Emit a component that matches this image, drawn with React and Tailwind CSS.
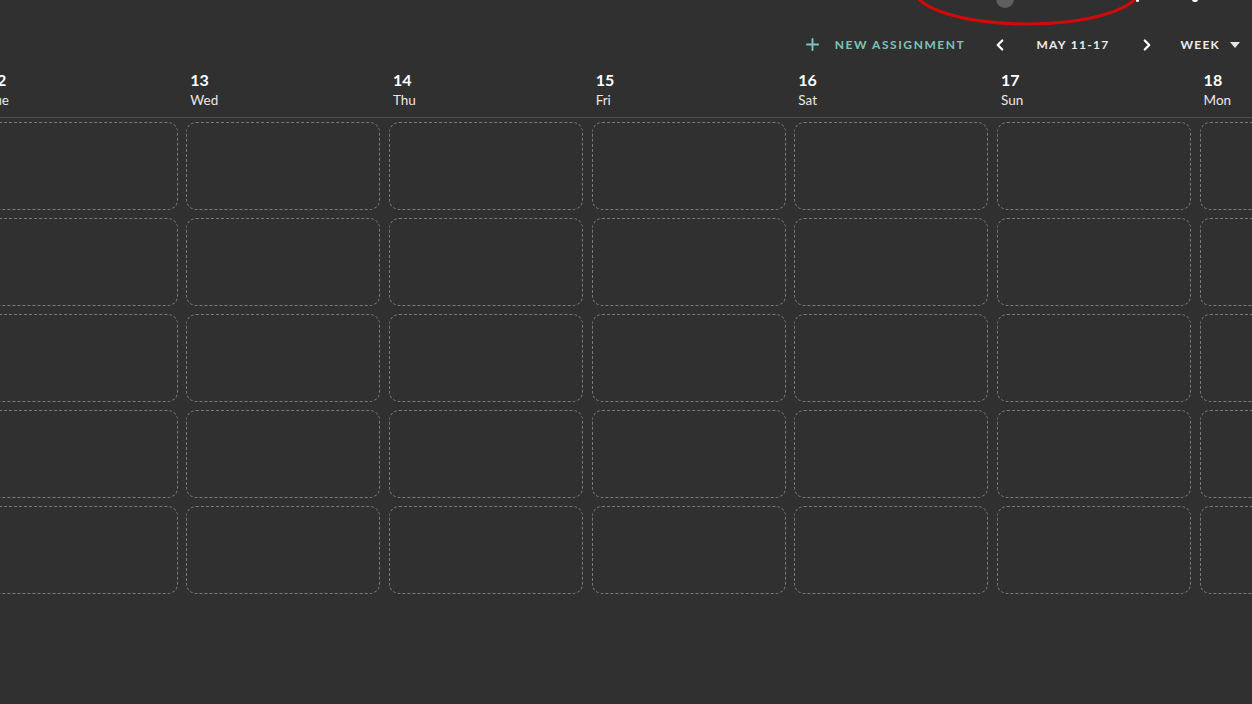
import { Plus, ChevronLeft, ChevronRight } from "lucide-react";

const days = [
  { num: 12, name: "Tue" },
  { num: 13, name: "Wed" },
  { num: 14, name: "Thu" },
  { num: 15, name: "Fri" },
  { num: 16, name: "Sat" },
  { num: 17, name: "Sun" },
  { num: 18, name: "Mon" },
];

const slots = [0, 1, 2, 3, 4];

const font = { fontFamily: "Lato, 'Noto Sans', sans-serif" };

const Toolbar = () => (
  <div className="relative h-[70px]">
    {/* top-bar remnants with the highlight ring */}
    <div className="absolute left-[996px] top-[-10px] h-[18px] w-[18px] rounded-full bg-[#5f5f5f]" />
    <div className="absolute left-[1136px] top-[-2px] h-[4px] w-[3px] rounded-full bg-white" />
    <div className="absolute left-[1192px] top-[-3px] h-[5px] w-[6px] rounded-full bg-white" />
    <svg className="absolute left-[908px] top-[-36px]" width="240" height="66" viewBox="0 0 240 66">
      <ellipse cx="119" cy="26" rx="112" ry="34" fill="none" stroke="#d10a0a" strokeWidth="3" />
    </svg>

    <div className="absolute inset-x-0 top-[35px] flex items-center justify-end pr-[12px]">
      <button className="flex items-center gap-[13px] text-[#7cc5bd]">
        <Plus size={19} strokeWidth={2.4} />
        <span className="text-[12px] font-bold tracking-[0.13em]">NEW ASSIGNMENT</span>
      </button>
      <button className="ml-[26px] text-white">
        <ChevronLeft size={18} strokeWidth={3} />
      </button>
      <span className="ml-[27px] text-[12px] font-bold tracking-[0.11em] text-[#ececec]">MAY 11-17</span>
      <button className="ml-[28px] text-white">
        <ChevronRight size={18} strokeWidth={3} />
      </button>
      <div className="ml-[25px] flex items-center gap-[10px] text-[#ececec]">
        <span className="text-[12px] font-bold tracking-[0.1em]">WEEK</span>
        <svg width="10" height="6" viewBox="0 0 10 6">
          <path d="M0 0h10L5 6z" fill="#e5e5e5" />
        </svg>
      </div>
    </div>
  </div>
);

const App = () => {
  return (
    <div className="h-[704px] w-full overflow-hidden bg-[#303030] text-white" style={font}>
      <Toolbar />
      <div className="border-b border-[#505050] pb-[8px]">
        <div className="ml-[-16.33px] flex gap-[8.67px]">
          {days.map((d) => (
            <div key={d.num} className="w-[194px] shrink-0 pl-[4px]">
              <div className="text-[16px] font-bold leading-[20px]">{d.num}</div>
              <div className="mt-[1px] text-[13.5px] leading-[18px] text-[#e8e8e8]">{d.name}</div>
            </div>
          ))}
        </div>
      </div>
      <div className="ml-[-16.33px] mt-[4px] flex gap-[8.67px]">
        {days.map((d) => (
          <div key={d.num} className="flex w-[194px] shrink-0 flex-col gap-[8px]">
            {slots.map((s) => (
              <div key={s} className="h-[88px] rounded-[10px] border border-dashed border-[#7a7a7a]" />
            ))}
          </div>
        ))}
      </div>
    </div>
  );
};

export default App;
